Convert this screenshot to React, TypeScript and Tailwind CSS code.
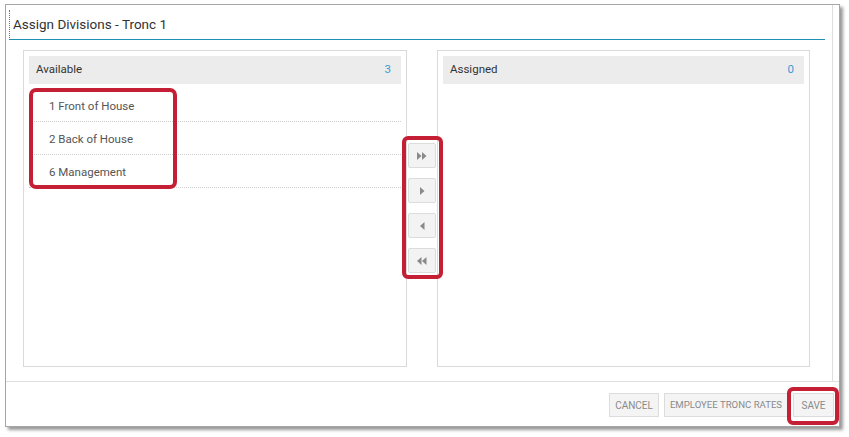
import type { ReactNode } from "react";

const available = ["1 Front of House", "2 Back of House", "6 Management"];

function Tri({ dir }: { dir: "r" | "l" }) {
  return dir === "r" ? (
    <path d="M0 0 L4.5 4 L0 8 Z" />
  ) : (
    <path d="M4.5 0 L0 4 L4.5 8 Z" />
  );
}

function MoveButton({ children }: { children: ReactNode }) {
  return (
    <button className="flex h-[25px] w-[28px] items-center justify-center rounded-[2px] border border-[#dcdcdc] bg-[#f3f3f3] text-[#8a8a8a]">
      {children}
    </button>
  );
}

function Panel({
  title,
  count,
  width,
  items,
}: {
  title: string;
  count: number;
  width: string;
  items: string[];
}) {
  return (
    <div className={`${width} h-[317px] border border-[#dadada] p-[5px]`}>
      <div className="flex h-[28px] items-center justify-between bg-[#ececec] pl-[7px] pr-[10px] text-[11.5px]">
        <span className="text-[#333]">{title}</span>
        <span className="text-[#3b9bd2]">{count}</span>
      </div>
      <div className="mt-[5px]">
        {items.map((item) => (
          <div
            key={item}
            className="flex h-[33px] items-center border-b border-dotted border-[#cfcfcf] pl-[20px] pt-[3px] text-[11.5px] text-[#555]"
          >
            {item}
          </div>
        ))}
      </div>
    </div>
  );
}

export default function App() {
  return (
    <div className="relative h-[437px] w-[849px] bg-white pl-[5px] pt-[4px] font-['Roboto',sans-serif]">
      {/* Dialog window */}
      <div className="flex h-[423px] w-[835px] flex-col border border-[#a6a6a6] bg-white shadow-[3px_3px_3px_rgba(0,0,0,0.4)]">
        <div className="flex flex-1">
          <div className="w-[827px] border-r border-[#dedede]">
            {/* Title */}
            <div className="ml-[3px] mt-[5px] flex h-[30px] w-[816px] items-center border-b border-l border-b-[#2290b2] border-l-[#2290b2] pl-[3px] text-[13.5px] text-[#333] [border-left-style:dotted]">
              Assign Divisions - Tronc 1
            </div>

            {/* Lists */}
            <div className="ml-[17px] mt-[10px] flex">
              <Panel title="Available" count={3} width="w-[384px]" items={available} />

              <div className="flex w-[30px] flex-col items-center gap-[10px] pt-[93px]">
                <MoveButton>
                  <svg width="10" height="8" viewBox="0 0 10 8" fill="currentColor">
                    <Tri dir="r" />
                    <g transform="translate(5 0)">
                      <Tri dir="r" />
                    </g>
                  </svg>
                </MoveButton>
                <MoveButton>
                  <svg width="5" height="8" viewBox="0 0 5 8" fill="currentColor">
                    <Tri dir="r" />
                  </svg>
                </MoveButton>
                <MoveButton>
                  <svg width="5" height="8" viewBox="0 0 5 8" fill="currentColor">
                    <Tri dir="l" />
                  </svg>
                </MoveButton>
                <MoveButton>
                  <svg width="10" height="8" viewBox="0 0 10 8" fill="currentColor">
                    <Tri dir="l" />
                    <g transform="translate(5 0)">
                      <Tri dir="l" />
                    </g>
                  </svg>
                </MoveButton>
              </div>

              <Panel title="Assigned" count={0} width="w-[373px]" items={[]} />
            </div>
          </div>
        </div>

        {/* Footer */}
        <div className="flex h-[45px] items-start justify-end gap-[5px] border-t border-[#dedede] pr-[5px] pt-[11px]">
          <button className="h-[24px] w-[50px] border border-[#dcdcdc] bg-[#f4f4f4] text-[10px] text-[#8a8a8a]">
            CANCEL
          </button>
          <button className="h-[24px] w-[124px] border border-[#dcdcdc] bg-[#f4f4f4] text-[9.6px] text-[#8a8a8a]">
            EMPLOYEE TRONC RATES
          </button>
          <button className="h-[24px] w-[41px] border border-[#dcdcdc] bg-[#f4f4f4] text-[10px] text-[#8a8a8a]">
            SAVE
          </button>
        </div>
      </div>

      {/* Highlight annotations */}
      <div className="absolute left-[29px] top-[88px] h-[101px] w-[148px] rounded-[7px] border-4 border-[#c41f34]" />
      <div className="absolute left-[402px] top-[136px] h-[143px] w-[41px] rounded-[6px] border-4 border-[#c41f34]" />
      <div className="absolute left-[787px] top-[387px] h-[38px] w-[52px] rounded-[6px] border-4 border-[#c41f34]" />
    </div>
  );
}
